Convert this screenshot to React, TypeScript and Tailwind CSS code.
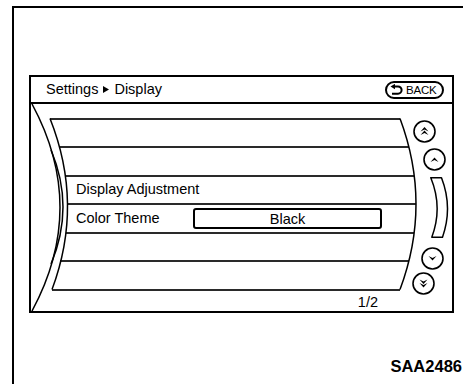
const lines = [
  "ml-[19px] w-[350px]",
  "ml-[29px] w-[349px]",
  "ml-[35px] w-[348px]",
  "ml-[36px] w-[349px]",
  "ml-[35px] w-[348px]",
  "ml-[29px] w-[349px]",
  "ml-[21px] w-[348px]",
];

const Line = ({ cls }: { cls: string }) => <div className={`h-[2px] shrink-0 bg-[#2a2a2a] ${cls}`} />;

const Arrow = ({ y, down }: { y: number; down?: boolean }) => {
  const d = down
    ? `M11.5 ${y + 4.5} L15.5 ${y} L11.5 ${y + 2} L7.5 ${y} Z`
    : `M11.5 ${y} L15.5 ${y + 4.5} L11.5 ${y + 2.5} L7.5 ${y + 4.5} Z`;
  return <path d={d} fill="black" />;
};

const RoundBtn = ({ kind, className }: { kind: "up2" | "up" | "down" | "down2"; className: string }) => (
  <svg width="23" height="23" viewBox="0 0 23 23" className={`shrink-0 ${className}`}>
    <circle cx="11.5" cy="11.5" r="10.5" fill="white" stroke="black" strokeWidth="1.6" />
    {kind === "up2" && (
      <>
        <Arrow y={7} />
        <Arrow y={10.5} />
      </>
    )}
    {kind === "up" && <Arrow y={9.5} />}
    {kind === "down" && <Arrow y={9} down />}
    {kind === "down2" && (
      <>
        <Arrow y={7.5} down />
        <Arrow y={11} down />
      </>
    )}
  </svg>
);

export default function App() {
  return (
    <div className="w-[463px] h-[384px] bg-white overflow-hidden flex flex-col text-black font-['Liberation_Sans',Arial,sans-serif]">
      <div className="ml-[12px] mt-[6px] flex-1 border-l-2 border-t-2 border-black pl-[15px] pt-[67px] flex flex-col">
        <div className="w-[425px] h-[238px] shrink-0 border-2 border-black flex flex-col">
          {/* header */}
          <div className="h-[27px] shrink-0 border-b-2 border-black flex items-center justify-between pl-[15px] pr-[8px]">
            <div className="flex items-center text-[14.5px] leading-[17px]">
              <span>Settings</span>
              <svg width="6" height="7" viewBox="0 0 6 7" className="ml-[5px] mr-[5px]">
                <path d="M0 0 L6 3.5 L0 7 Z" fill="black" />
              </svg>
              <span>Display</span>
            </div>
            <div className="w-[59px] h-[18px] mt-[1px] rounded-full border-2 border-black flex items-center pl-[3px]">
              <svg width="13" height="12" viewBox="0 0 13 12">
                <path d="M4.5 2.5 H8 A3.6 3.6 0 0 1 8 9.7 H2" fill="none" stroke="black" strokeWidth="2" />
                <path d="M0.5 2.5 L5 -0.2 L5 5.2 Z" fill="black" />
              </svg>
              <span className="ml-[3px] text-[11.5px] leading-[12px] tracking-[-0.2px]">BACK</span>
            </div>
          </div>

          {/* body */}
          <div className="relative flex flex-1">
            <div className="w-[385px] shrink-0 pt-[14px] flex flex-col">
              <Line cls={lines[0]} />
              <div className="h-[26px]" />
              <Line cls={lines[1]} />
              <div className="h-[27px]" />
              <Line cls={lines[2]} />
              <div className="h-[26px] flex items-center pl-[45px] text-[14.5px]">Display Adjustment</div>
              <Line cls={lines[3]} />
              <div className="h-[27px] flex items-center pl-[45px] text-[14.5px]">
                <span className="w-[117px]">Color Theme</span>
                <div className="w-[189px] h-[21px] border-2 border-black rounded-[3px] flex items-center justify-center leading-[16px]">
                  Black
                </div>
              </div>
              <Line cls={lines[4]} />
              <div className="h-[26px]" />
              <Line cls={lines[5]} />
              <div className="h-[27px]" />
              <Line cls={lines[6]} />
              <div className="mt-[3px] pr-[38px] text-right text-[14.5px] leading-[17px]">1/2</div>
            </div>

            <div className="w-[36px] shrink-0 pt-[16px] flex flex-col">
              <RoundBtn kind="up2" className="-ml-[3px]" />
              <RoundBtn kind="up" className="ml-[7px] mt-[5px]" />
              <svg width="19" height="61" viewBox="0 0 19 61" className="ml-[14px] mt-[6px] shrink-0">
                <path
                  d="M0.8 0.8 L11.5 0.8 Q23 30.5 12.5 60.2 L1.8 60.2 Q13 30.5 0.8 0.8 Z"
                  fill="white"
                  stroke="black"
                  strokeWidth="1.5"
                  strokeLinejoin="round"
                />
              </svg>
              <RoundBtn kind="down" className="ml-[5px] mt-[9px]" />
              <RoundBtn kind="down2" className="-ml-[4px] mt-[2px]" />
            </div>

            {/* bezel curves */}
            <svg className="absolute left-0 top-0 pointer-events-none" width="421" height="207" viewBox="0 0 421 207">
              <g fill="none" stroke="black" strokeWidth="1.5">
                <path d="M1 0 Q57 103.5 1 207" />
                <path d="M20 46 Q44 103 20 160" />
                <path d="M19 14.5 Q53 100 21 185.5" />
                <path d="M369 14.5 Q401 100 369 185.5" />
              </g>
            </svg>
          </div>
        </div>

        <div className="mt-[44px] pr-[1px] text-right font-bold text-[16.5px] leading-[19px]">SAA2486</div>
      </div>
    </div>
  );
}
